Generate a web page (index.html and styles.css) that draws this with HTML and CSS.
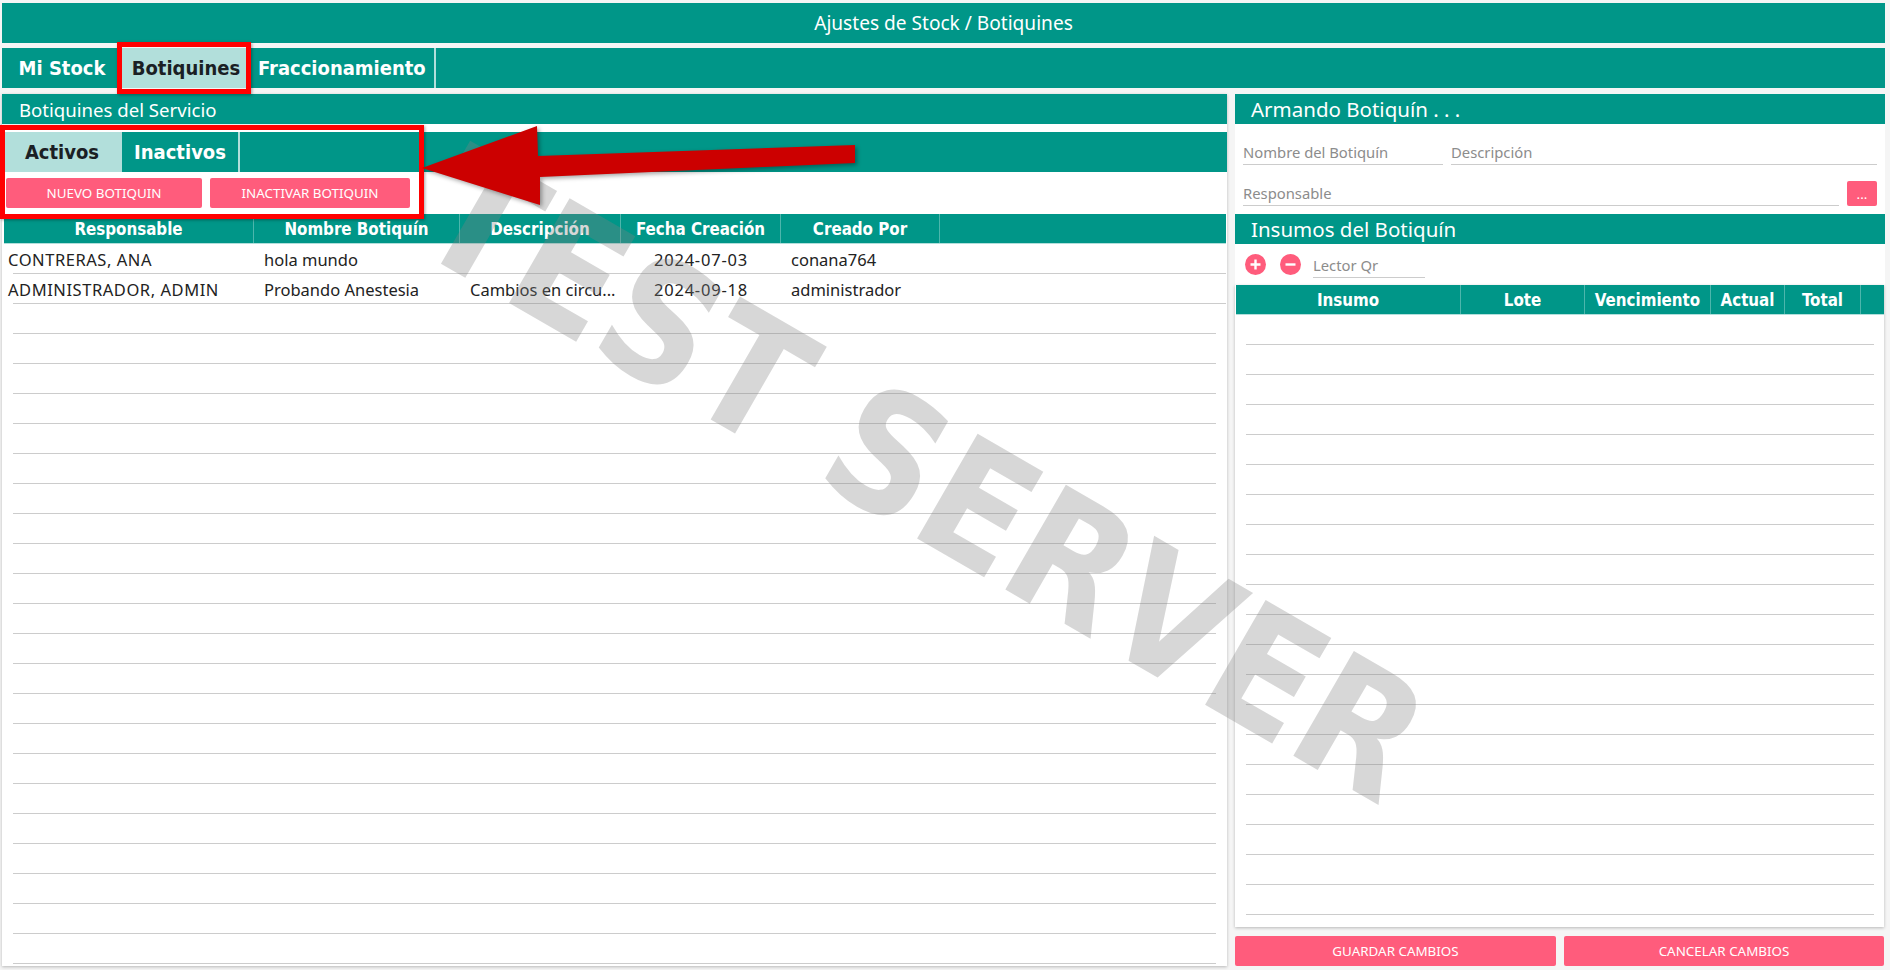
FILE: index.html
```html
<!doctype html>
<html lang="es">

<head>
    <meta charset="UTF-8">
    <title>Ajustes de Stock / Botiquines</title>
    <link rel="stylesheet" href="styles.css">
</head>

<body>
    <div class="title-bar">Ajustes de Stock / Botiquines</div>

    <!-- pestañas principales -->
    <div class="tabs">
        <div class="tab">Mi Stock</div>
        <div class="tab active tab-botiquines">Botiquines</div>
        <div class="tab divided">Fraccionamiento</div>
    </div>

    <div class="columns">
        <!-- columna izquierda -->
        <div class="left">
            <div class="panel-head small">Botiquines del Servicio</div>
            <div class="tabs sub-tabs">
                <div class="tab active">Activos</div>
                <div class="tab divided tab-inactivos">Inactivos</div>
            </div>
            <div class="actions">
                <button class="btn btn-nuevo">NUEVO BOTIQUIN</button>
                <button class="btn btn-inactivar">INACTIVAR BOTIQUIN</button>
            </div>
            <div class="table main-table">
                <div class="head">
                    <div>Responsable</div>
                    <div>Nombre Botiquín</div>
                    <div>Descripción</div>
                    <div>Fecha Creación</div>
                    <div>Creado Por</div>
                    <div></div>
                </div>
                <div class="row filled">
                    <div class="first">CONTRERAS, ANA</div>
                    <div>hola mundo</div>
                    <div></div>
                    <div class="center">2024-07-03</div>
                    <div>conana764</div>
                </div>
                <div class="row filled">
                    <div class="first">ADMINISTRADOR, ADMIN</div>
                    <div>Probando Anestesia</div>
                    <div>Cambios en circu...</div>
                    <div class="center">2024-09-18</div>
                    <div>administrador</div>
                </div>
                <div class="row"></div><div class="row"></div><div class="row"></div><div class="row"></div>
                <div class="row"></div><div class="row"></div><div class="row"></div><div class="row"></div>
                <div class="row"></div><div class="row"></div><div class="row"></div><div class="row"></div>
                <div class="row"></div><div class="row"></div><div class="row"></div><div class="row"></div>
                <div class="row"></div><div class="row"></div><div class="row"></div><div class="row"></div>
                <div class="row"></div><div class="row"></div>
            </div>
        </div>

        <!-- columna derecha -->
        <div class="right">
            <div class="panel-head">Armando Botiquín . . .</div>
            <div class="form">
                <div class="form-line">
                    <div class="field field-nombre">Nombre del Botiquín</div>
                    <div class="field">Descripción</div>
                </div>
                <div class="form-line">
                    <div class="field">Responsable</div>
                    <button class="btn btn-more">...</button>
                </div>
            </div>
            <div class="panel-head">Insumos del Botiquín</div>
            <div class="tools">
                <svg class="round-icon" viewBox="0 0 21 21"><circle cx="10.5" cy="10.5" r="10.5" fill="#ff5c7c"/><path d="M10.5 5.5v10M5.5 10.5h10" stroke="#fff" stroke-width="2.4"/></svg>
                <svg class="round-icon" viewBox="0 0 21 21"><circle cx="10.5" cy="10.5" r="10.5" fill="#ff5c7c"/><path d="M5.5 10.5h10" stroke="#fff" stroke-width="2.4"/></svg>
                <div class="field field-qr">Lector Qr</div>
            </div>
            <div class="table side-table">
                <div class="head">
                    <div>Insumo</div>
                    <div>Lote</div>
                    <div>Vencimiento</div>
                    <div>Actual</div>
                    <div>Total</div>
                    <div></div>
                </div>
                <div class="row"></div><div class="row"></div><div class="row"></div><div class="row"></div>
                <div class="row"></div><div class="row"></div><div class="row"></div><div class="row"></div>
                <div class="row"></div><div class="row"></div><div class="row"></div><div class="row"></div>
                <div class="row"></div><div class="row"></div><div class="row"></div><div class="row"></div>
                <div class="row"></div><div class="row"></div><div class="row"></div><div class="row"></div>
            </div>
            <div class="footer-actions">
                <button class="btn">GUARDAR CAMBIOS</button>
                <button class="btn">CANCELAR CAMBIOS</button>
            </div>
        </div>
    </div>

    <!-- marca de agua y anotaciones encima de la pantalla -->
    <div class="watermark">TEST SERVER</div>
    <div class="mark mark-tab"></div>
    <div class="mark mark-sub"></div>
    <svg class="arrow" viewBox="0 0 1890 970" width="1890" height="970">
        <polygon points="422,168 537,126 538,156 855,145 855,163 540,177 540,205" fill="#cc0000"/>
    </svg>
</body>

</html>
```

FILE: styles.css
```css
* {
    box-sizing: border-box;
}

body {
    margin: 0;
    width: 1890px;
    height: 970px;
    position: relative;
    overflow: hidden;
    background-color: #f5f5f5;
    font-family: "Noto Sans", sans-serif;
    font-size: 16.5px;
    color: #222222;
}

.title-bar {
    height: 40px;
    margin: 3px 5px 0 2px;
    background-color: #009688;
    color: #ffffff;
    font-size: 19.1px;
    display: flex;
    align-items: center;
    justify-content: center;
}

/* pestañas */
.tabs {
    height: 40px;
    margin: 5px 5px 0 2px;
    background-color: #009688;
    display: flex;
}

.tab {
    min-width: 120px;
    padding: 0 8px;
    color: #ffffff;
    font-family: "DejaVu Sans Condensed", "DejaVu Sans", sans-serif;
    font-size: 20px;
    font-weight: bold;
    display: flex;
    align-items: center;
    justify-content: center;
}

.tab.active {
    background-color: #b2dfdb;
    color: #1a2024;
}

.tab.divided {
    border-right: 2px solid #b2dfdb;
}

.tab-botiquines {
    width: 128px;
}

.tab-inactivos {
    min-width: 118px;
}

.columns {
    display: grid;
    grid-template-columns: 1225px 650px;
    gap: 8px;
    margin: 6px 5px 0 2px;
}

.left {
    height: 872px;
    background-color: #ffffff;
    box-shadow: 0 1px 3px rgba(0, 0, 0, 0.25);
}

.panel-head {
    height: 30px;
    padding-left: 16px;
    background-color: #009688;
    color: #ffffff;
    font-size: 20.5px;
    display: flex;
    align-items: center;
}

.panel-head.small {
    padding-left: 17px;
    font-size: 18.6px;
}

.sub-tabs {
    margin: 8px 0 0 0;
}

.actions {
    display: flex;
    gap: 8px;
    padding: 6px 0 6px 4px;
}

.btn {
    height: 30px;
    border: none;
    border-radius: 2px;
    background-color: #ff5c7c;
    color: #ffffff;
    font-family: inherit;
    font-size: 13.4px;
    padding: 0;
}

.btn-nuevo {
    width: 196px;
}

.btn-inactivar {
    width: 200px;
}

/* tablas */
.table .head {
    height: 30px;
    display: grid;
    background-color: #009688;
    border-bottom: 1px solid #b2dfdb;
    color: #ffffff;
    font-family: "DejaVu Sans Condensed", "DejaVu Sans", sans-serif;
    font-size: 16.8px;
    font-weight: bold;
}

.head div {
    display: flex;
    align-items: center;
    justify-content: center;
    border-right: 1px solid #4db6ac;
}

.head div:last-child {
    border-right: none;
}

.row {
    height: 30px;
    border-bottom: 1px solid #cccccc;
}

.main-table {
    margin: 0 1px 0 2px;
}

.main-table .head,
.row.filled {
    grid-template-columns: 250px 206px 161px 160px 159px 1fr;
}

.main-table .row {
    margin: 0 10px 0 9px;
}

.main-table .row.filled {
    margin: 0;
    display: grid;
    border-bottom: none;
    background: linear-gradient(#cccccc, #cccccc) 9px 100% / calc(100% - 9px) 1px no-repeat;
}

.row.filled div {
    padding: 1px 0 0 10px;
    display: flex;
    align-items: center;
    white-space: nowrap;
}

.row.filled .first {
    padding-left: 4px;
    letter-spacing: 0.55px;
}

.row.filled .center {
    padding-left: 0;
    justify-content: center;
    letter-spacing: 0.8px;
}

/* columna derecha */
.form {
    height: 90px;
    padding: 11px 8px 0;
    background-color: #ffffff;
}

.form-line {
    display: flex;
    gap: 8px;
    align-items: flex-end;
    margin-bottom: 11px;
}

.field {
    flex: 1;
    height: 30px;
    padding-top: 5px;
    display: flex;
    align-items: center;
    border-bottom: 1px solid #cccccc;
    color: #8c8c8c;
    font-size: 14.8px;
}

.field-nombre {
    flex: 0 0 200px;
}

.btn-more {
    width: 30px;
    height: 25px;
}

.tools {
    height: 41px;
    display: flex;
    align-items: center;
    padding-left: 10px;
    background-color: #ffffff;
}

.round-icon {
    width: 21px;
    height: 21px;
    margin-right: 14px;
    flex: none;
}

.round-icon + .round-icon {
    margin-right: 12px;
}

.field-qr {
    flex: 0 0 112px;
    height: 24px;
    padding-top: 0;
    margin: 2px 0 0 0;
}

.side-table {
    height: 642px;
    margin-right: 1px;
    background-color: #ffffff;
    box-shadow: 0 1px 3px rgba(0, 0, 0, 0.25);
}

.side-table .head {
    grid-template-columns: 225px 124px 126px 74px 76px 1fr;
    margin-left: 1px;
}

.side-table .row {
    margin: 0 10px 0 11px;
}

.footer-actions {
    display: grid;
    grid-template-columns: 321px 320px;
    gap: 8px;
    margin-top: 9px;
}

/* encima de la pantalla */
.watermark {
    position: absolute;
    left: 479px;
    top: 124px;
    transform-origin: 0 0;
    transform: rotate(30deg);
    font-family: "DejaVu Sans Condensed", "DejaVu Sans", sans-serif;
    font-size: 166px;
    font-weight: bold;
    line-height: 1;
    white-space: nowrap;
    color: rgba(130, 130, 130, 0.32);
    pointer-events: none;
}

.mark {
    position: absolute;
    border: 5px solid #ff0000;
    box-shadow: 1px 1px 3px rgba(0, 0, 0, 0.35);
}

.mark-tab {
    left: 117px;
    top: 42px;
    width: 134px;
    height: 52px;
}

.mark-sub {
    left: 0;
    top: 125px;
    width: 424px;
    height: 94px;
}

.arrow {
    position: absolute;
    left: 0;
    top: 0;
    filter: drop-shadow(2px 2px 2px rgba(0, 0, 0, 0.35));
    pointer-events: none;
}
```
